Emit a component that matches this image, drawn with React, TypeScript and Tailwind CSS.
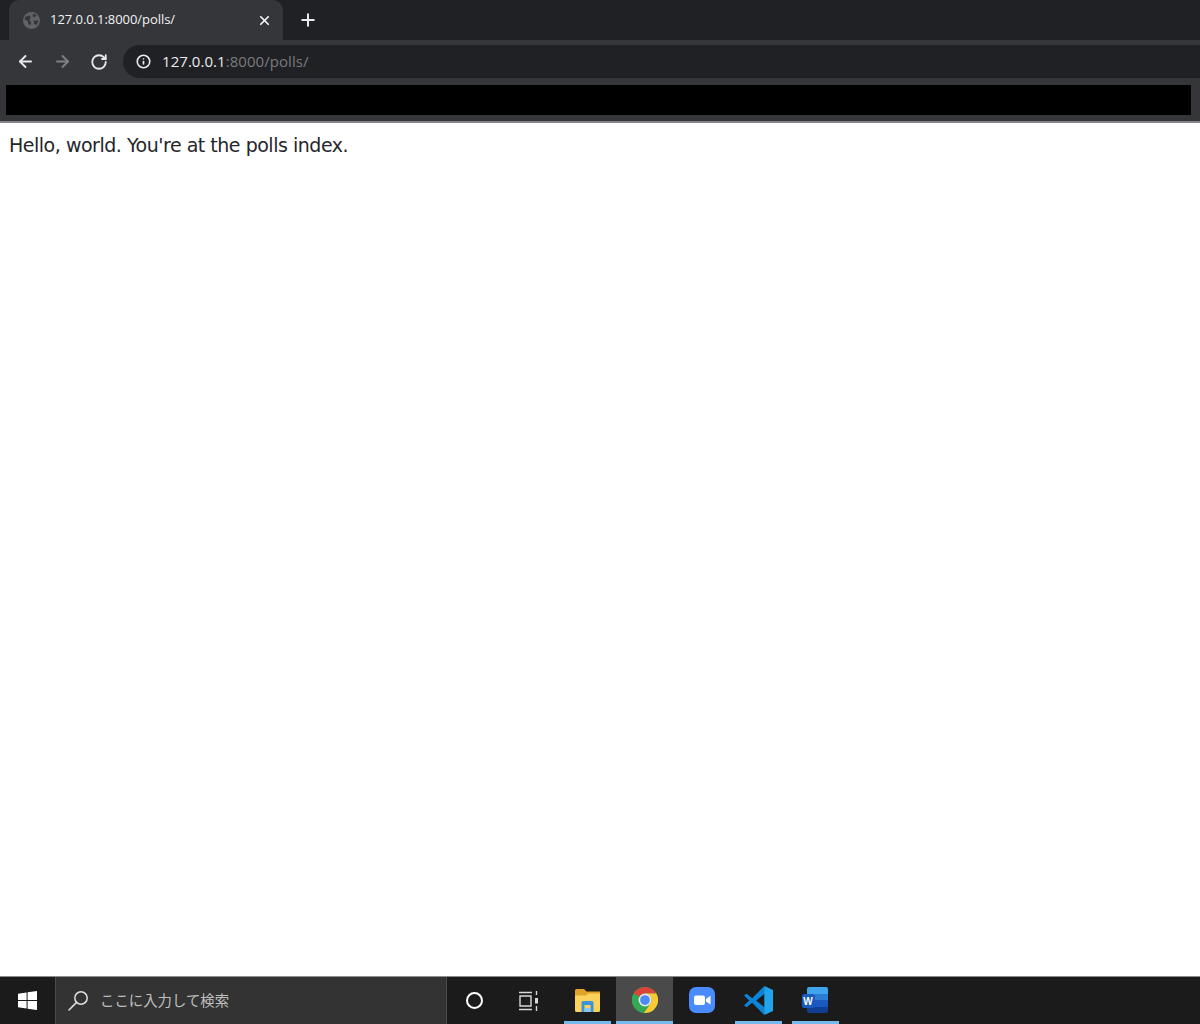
import React from "react";
import { ArrowLeft, ArrowRight, RotateCw, X, Plus, Info } from "lucide-react";

function Globe() {
  return (
    <svg width="17" height="17" viewBox="0 0 16 16">
      <circle cx="8" cy="8" r="8" fill="#5f6368" />
      <path d="M2 4.5 L6 3 L7.5 5 L6 7.5 L7.5 9.5 L7 13 L5 11 L4.5 8.5 L1.5 7 Z M9.5 1.5 L13 3 L11 5 L9 4 Z M10 8 L14.5 8 L13 12 L10.5 11.5 Z" fill="#35363a" />
    </svg>
  );
}

function WindowsLogo() {
  return (
    <svg width="19" height="19" viewBox="0 0 19 19" fill="#ffffff">
      <path d="M0 2.8 L8.6 1.5 V9 H0 Z M9.6 1.3 L19 0 V9 H9.6 Z M0 10 H8.6 V17.5 L0 16.2 Z M9.6 10 H19 V19 L9.6 17.7 Z" />
    </svg>
  );
}

function SearchIcon() {
  return (
    <svg width="21" height="21" viewBox="0 0 21 21" fill="none" stroke="#e0e0e0" strokeWidth="1.5">
      <circle cx="13" cy="8" r="6.2" />
      <path d="M8.6 12.4 L1 20" strokeLinecap="round" />
    </svg>
  );
}

function TaskView() {
  return (
    <svg width="20" height="20" viewBox="0 0 20 20" fill="none" stroke="#d8d8d8" strokeWidth="1.4">
      <path d="M0 1.5 H13 M0 18.5 H13" />
      <path d="M1 5 H12 V15 H1 Z" />
      <path d="M17.5 0 V4 M17.5 15 V20" />
      <rect x="16" y="7" width="3" height="5.5" fill="#d8d8d8" stroke="none" />
    </svg>
  );
}

function FolderIcon() {
  return (
    <svg width="25" height="23" viewBox="0 0 25 23">
      <path d="M0 1.5 a1.5 1.5 0 0 1 1.5 -1.5 H9 L11.5 2.5 H25 V8 H0 Z" fill="#dfa32a" />
      <path d="M0 6.5 H11 L13 4.5 H25 V21.5 a1.5 1.5 0 0 1 -1.5 1.5 H1.5 a1.5 1.5 0 0 1 -1.5 -1.5 Z" fill="#fbd25c" />
      <path d="M6.5 13.5 a1.5 1.5 0 0 1 1.5 -1.5 H17 a1.5 1.5 0 0 1 1.5 1.5 V23 H15.5 V16 H9.5 V23 H6.5 Z" fill="#3d94d8" />
      <rect x="9.5" y="19" width="6" height="4" fill="#8bc4ee" />
    </svg>
  );
}

function ChromeIcon() {
  return (
    <svg width="26" height="26" viewBox="0 0 48 48">
      <circle cx="24" cy="24" r="24" fill="#34a853" />
      <path d="M24 0 A24 24 0 0 1 44.8 12 L24 12 A12 12 0 0 0 13.6 18 L3.2 12 A24 24 0 0 1 24 0 Z" fill="#db4437" />
      <path d="M3.2 12 L13.6 30 L24 48 A24 24 0 0 1 3.2 12 Z" fill="#34a853" />
      <path d="M44.8 12 A24 24 0 0 1 22 47.9 L34.4 30 A12 12 0 0 0 34.4 18 L24 12 Z" fill="#fcc934" />
      <circle cx="24" cy="24" r="12" fill="#e8e8f0" />
      <circle cx="24" cy="24" r="9" fill="#4c8bf0" />
    </svg>
  );
}

function ZoomIcon() {
  return (
    <svg width="26" height="26" viewBox="0 0 26 26">
      <rect width="26" height="26" rx="7" fill="#4a8cff" />
      <rect x="5" y="8.5" width="11" height="9.5" rx="2" fill="#ffffff" />
      <path d="M17 12 L21.5 8.8 V17.6 L17 14.5 Z" fill="#ffffff" />
    </svg>
  );
}

function VSCodeIcon() {
  return (
    <svg width="29" height="29" viewBox="0 0 100 100">
      <path d="M70 0 L28 42 L9 27 L0 33 L18 50 L0 67 L9 73 L28 58 L70 100 L72 74 L42 50 L72 26 Z" fill="#0b84d6" />
      <path d="M70 0 L100 14 V86 L70 100 Z" fill="#20a4ee" />
    </svg>
  );
}

function WordIcon() {
  return (
    <div className="relative mr-[2px] h-[26px] w-[26px]">
      <div className="absolute right-0 top-0 flex h-[26px] w-[21px] flex-col overflow-hidden rounded-[2px]">
        <div className="h-[6.5px] bg-[#41a5ee]" />
        <div className="h-[6.5px] bg-[#2b7cd3]" />
        <div className="h-[6.5px] bg-[#185abd]" />
        <div className="h-[6.5px] bg-[#103f91]" />
      </div>
      <div className="absolute left-0 top-[7px] flex h-[14px] w-[13px] items-center justify-center rounded-[2px] bg-[#185abd] font-['Liberation_Sans',sans-serif] text-[10px] font-bold text-white">
        W
      </div>
    </div>
  );
}

function TaskItem({ children, running, active }: { children: React.ReactNode; running?: boolean; active?: boolean }) {
  return (
    <div className={`relative flex h-full w-[57px] items-center justify-center pb-[1px] ${active ? "bg-[#4a4a4a]" : ""}`}>
      {children}
      {running && <div className={`absolute bottom-0 h-[3px] bg-[#76b9ed] ${active ? "inset-x-0" : "left-[5px] right-[5px]"}`} />}
    </div>
  );
}

export default function App() {
  return (
    <div className="flex h-[1024px] w-[1200px] flex-col overflow-hidden bg-white font-['Liberation_Sans',sans-serif]">
      <div className="flex h-[40px] items-end bg-[#202124] pl-[9px]">
        <div className="flex h-[40px] w-[274px] items-center rounded-t-[10px] bg-[#35363a] pl-[14px] pr-[11px]">
          <Globe />
          <span className="ml-[10px] flex-1 font-['Open_Sans',sans-serif] text-[13px] font-medium tracking-[-0.05px] text-[#f1f3f4]">127.0.0.1:8000/polls/</span>
          <X size={15} strokeWidth={2.8} color="#f1f3f4" />
        </div>
        <div className="flex h-[40px] w-[50px] items-center justify-center">
          <Plus size={20} strokeWidth={2.4} color="#e8eaed" />
        </div>
      </div>

      <div className="flex h-[83px] flex-col border-b-2 border-[#85868a] bg-[#35363a]">
        <div className="flex h-[38px] items-center pt-[5px]">
          <div className="flex w-[123px] items-center pl-[16px]">
            <ArrowLeft size={19} strokeWidth={2.4} color="#e8eaed" />
            <ArrowRight size={19} strokeWidth={2.4} color="#7d8083" className="ml-[18px]" />
            <RotateCw size={18} strokeWidth={2.4} color="#e8eaed" className="ml-[18px]" />
          </div>
          <div className="flex h-[33px] flex-1 items-center rounded-l-full bg-[#202124] pl-[13px]">
            <Info size={15} strokeWidth={2.6} color="#e8eaed" />
            <span className="ml-[11px] font-['Open_Sans',sans-serif] text-[15px] tracking-[0.05px] text-[#e8eaed]">
              127.0.0.1<span className="text-[#787b7e]">:8000/polls/</span>
            </span>
          </div>
        </div>
        <div className="ml-[6px] mt-[7px] h-[30px] w-[1185px] bg-black" />
      </div>

      <div className="flex-1 bg-white pl-[9px] pt-[9px]">
        <p className="font-['DejaVu_Sans',sans-serif] text-[19px] leading-[26px] tracking-[-0.48px] text-[#26262a]">Hello, world. You're at the polls index.</p>
      </div>

      <div className="flex h-[48px] items-stretch border-t border-[#8c8c8c] bg-[#1b1b1b]">
        <div className="flex w-[55px] items-center justify-center">
          <WindowsLogo />
        </div>
        <div className="flex w-[392px] items-center border-x border-[#4c4c4c] bg-[#333333] pl-[12px]">
          <SearchIcon />
          <span className="ml-[11px] -translate-y-px font-['Noto_Sans_CJK_JP',sans-serif] text-[14.4px] text-[#c0c0c0]">ここに入力して検索</span>
        </div>
        <div className="flex w-[55px] items-center justify-center">
          <div className="h-[17px] w-[17px] rounded-full border-[2.5px] border-white" />
        </div>
        <div className="flex w-[54px] items-center justify-center">
          <TaskView />
        </div>
        <div className="ml-[3px] flex items-stretch">
          <TaskItem running><FolderIcon /></TaskItem>
          <TaskItem running active><ChromeIcon /></TaskItem>
          <TaskItem><ZoomIcon /></TaskItem>
          <TaskItem running><VSCodeIcon /></TaskItem>
          <TaskItem running><WordIcon /></TaskItem>
        </div>
      </div>
    </div>
  );
}
